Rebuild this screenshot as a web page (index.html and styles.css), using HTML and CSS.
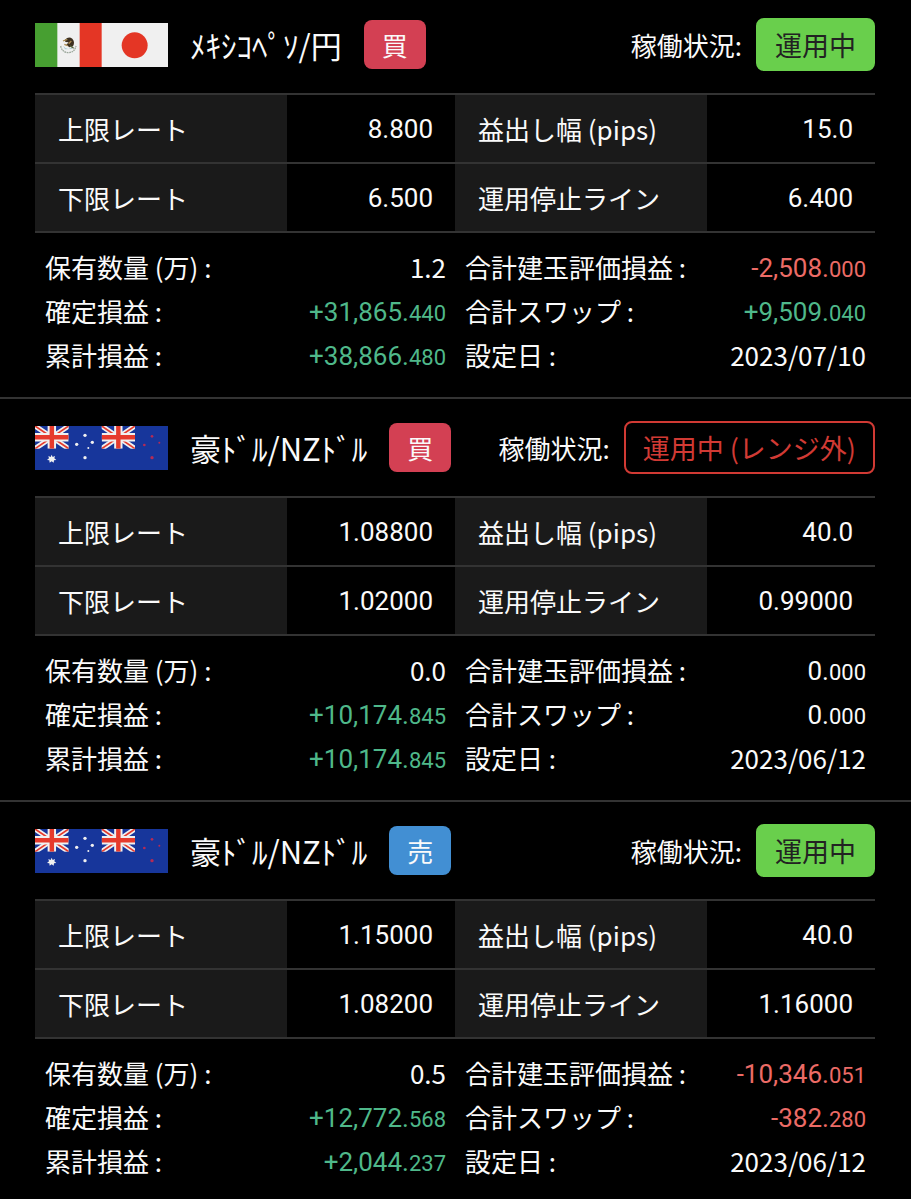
FILE: index.html
```
<!DOCTYPE html>
<html lang="ja">
<head>
  <meta charset="UTF-8">
  <meta name="viewport" content="width=device-width, initial-scale=1">
  <title>運用一覧</title>
  <link rel="stylesheet" href="styles.css">
</head>

<body>
  <!-- 国旗の共通パーツ -->
  <svg class="defs" aria-hidden="true">
    <symbol id="union" viewBox="0 0 60 40" preserveAspectRatio="none">
      <rect width="60" height="40" fill="#17369b"/>
      <path d="M0 0L60 40M60 0L0 40" stroke="#f0f0f0" stroke-width="9"/>
      <path d="M0 0L60 40M60 0L0 40" stroke="#e63a2c" stroke-width="3"/>
      <path d="M30 0V40M0 20H60" stroke="#f0f0f0" stroke-width="15"/>
      <path d="M30 0V40M0 20H60" stroke="#e63a2c" stroke-width="8"/>
    </symbol>
    <symbol id="mxn-jpy" viewBox="0 0 399 132" preserveAspectRatio="none">
      <rect width="399" height="132" fill="#f0f0f0"/>
      <rect width="67" height="132" fill="#479f31"/>
      <rect x="134" width="66" height="132" fill="#e43625"/>
      <path d="M77 69Q81 88 100 89Q119 88 123 69" fill="none" stroke="#9aa79a" stroke-width="4" stroke-dasharray="5 2"/>
      <path d="M84 68Q100 88 115 68L110 78L90 79Z" fill="#a9cdd2"/>
      <path d="M90 50Q101 38 112 47Q121 57 114 70L103 73L94 65L101 58L91 57Z" fill="#3d3020"/>
      <path d="M84 54L97 49M88 64L98 68M101 62L109 54" stroke="#a98a50" stroke-width="4"/>
      <path d="M105 68L116 76" stroke="#55643e" stroke-width="4"/>
      <circle cx="299" cy="67" r="39" fill="#e43625"/>
    </symbol>
    <symbol id="aud-nzd" viewBox="0 0 399 132" preserveAspectRatio="none">
      <rect width="399" height="132" fill="#17369b"/>
      <use href="#union" x="0" y="0" width="101" height="68"/>
      <use href="#union" x="200" y="0" width="100" height="68"/>
      <path fill="#f0f0f0" d="M50 86L53 93L60 90L58 97L64 102L57 103L56 110L50 106L44 110L43 103L36 102L42 97L40 90L47 93Z"/>
      <g fill="#f0f0f0">
        <circle cx="150" cy="28" r="5"/>
        <circle cx="125" cy="55" r="5"/>
        <circle cx="172" cy="49" r="5"/>
        <circle cx="160" cy="66" r="3"/>
        <circle cx="150" cy="95" r="5"/>
      </g>
      <g fill="#b52a55">
        <circle cx="351" cy="31" r="4"/>
        <circle cx="328" cy="57" r="4"/>
        <circle cx="373" cy="50" r="3"/>
        <circle cx="351" cy="95" r="5"/>
      </g>
    </symbol>
  </svg>

  <section class="card">
    <header class="card-header">
      <svg class="flags" role="img" aria-label="メキシコ 日本"><use href="#mxn-jpy"/></svg>
      <h2 class="pair">ﾒｷｼｺﾍﾟｿ/円</h2>
      <span class="side buy">買</span>
      <span class="status-label">稼働状況:</span>
      <span class="status running">運用中</span>
    </header>
    <table class="rates">
      <tr><th>上限レート</th><td>8.800</td><th>益出し幅 (pips)</th><td>15.0</td></tr>
      <tr><th>下限レート</th><td>6.500</td><th>運用停止ライン</th><td>6.400</td></tr>
    </table>
    <dl class="stats">
      <div><dt>保有数量 (万) :</dt><dd>1.2</dd></div>
      <div><dt>合計建玉評価損益 :</dt><dd class="num minus">-2,508.<small>000</small></dd></div>
      <div><dt>確定損益 :</dt><dd class="num plus">+31,865.<small>440</small></dd></div>
      <div><dt>合計スワップ :</dt><dd class="num plus">+9,509.<small>040</small></dd></div>
      <div><dt>累計損益 :</dt><dd class="num plus">+38,866.<small>480</small></dd></div>
      <div><dt>設定日 :</dt><dd>2023/07/10</dd></div>
    </dl>
  </section>

  <section class="card">
    <header class="card-header">
      <svg class="flags" role="img" aria-label="オーストラリア ニュージーランド"><use href="#aud-nzd"/></svg>
      <h2 class="pair">豪ﾄﾞﾙ/NZﾄﾞﾙ</h2>
      <span class="side buy">買</span>
      <span class="status-label">稼働状況:</span>
      <span class="status out">運用中 (レンジ外)</span>
    </header>
    <table class="rates">
      <tr><th>上限レート</th><td>1.08800</td><th>益出し幅 (pips)</th><td>40.0</td></tr>
      <tr><th>下限レート</th><td>1.02000</td><th>運用停止ライン</th><td>0.99000</td></tr>
    </table>
    <dl class="stats">
      <div><dt>保有数量 (万) :</dt><dd>0.0</dd></div>
      <div><dt>合計建玉評価損益 :</dt><dd class="num">0.<small>000</small></dd></div>
      <div><dt>確定損益 :</dt><dd class="num plus">+10,174.<small>845</small></dd></div>
      <div><dt>合計スワップ :</dt><dd class="num">0.<small>000</small></dd></div>
      <div><dt>累計損益 :</dt><dd class="num plus">+10,174.<small>845</small></dd></div>
      <div><dt>設定日 :</dt><dd>2023/06/12</dd></div>
    </dl>
  </section>

  <section class="card">
    <header class="card-header">
      <svg class="flags" role="img" aria-label="オーストラリア ニュージーランド"><use href="#aud-nzd"/></svg>
      <h2 class="pair">豪ﾄﾞﾙ/NZﾄﾞﾙ</h2>
      <span class="side sell">売</span>
      <span class="status-label">稼働状況:</span>
      <span class="status running">運用中</span>
    </header>
    <table class="rates">
      <tr><th>上限レート</th><td>1.15000</td><th>益出し幅 (pips)</th><td>40.0</td></tr>
      <tr><th>下限レート</th><td>1.08200</td><th>運用停止ライン</th><td>1.16000</td></tr>
    </table>
    <dl class="stats">
      <div><dt>保有数量 (万) :</dt><dd>0.5</dd></div>
      <div><dt>合計建玉評価損益 :</dt><dd class="num minus">-10,346.<small>051</small></dd></div>
      <div><dt>確定損益 :</dt><dd class="num plus">+12,772.<small>568</small></dd></div>
      <div><dt>合計スワップ :</dt><dd class="num minus">-382.<small>280</small></dd></div>
      <div><dt>累計損益 :</dt><dd class="num plus">+2,044.<small>237</small></dd></div>
      <div><dt>設定日 :</dt><dd>2023/06/12</dd></div>
    </dl>
  </section>
</body>
</html>
```

FILE: styles.css
```
* {
  box-sizing: border-box;
}
body {
  margin: 0;
  background-color: #000;
  color: #fafafa;
  font-family: "Noto Sans CJK JP", sans-serif;
  font-size: 26px;
  font-weight: 400;
}
.defs {
  display: none;
}
.card {
  padding: 22px 36px 20px 35px;
  border-bottom: 2px solid #333;
}
.card:first-of-type {
  padding-top: 18px;
}
.card:last-of-type {
  padding-bottom: 0;
  border-bottom: none;
}

/* ヘッダー */
.card-header {
  display: flex;
  align-items: center;
  height: 53px;
  margin-bottom: 22px;
}
.flags {
  width: 133px;
  height: 44px;
}
.pair {
  margin: 0 22px;
  font-size: 31px;
  font-weight: 400;
  line-height: 48px;
}
.side {
  width: 62px;
  line-height: 49px;
  border-radius: 8px;
  text-align: center;
}
.buy {
  background-color: #d34053;
}
.sell {
  background-color: #428fd3;
}
.status-label {
  margin-left: auto;
}
.status {
  margin-left: 14px;
  padding: 0 17px;
  border: 2px solid;
  border-radius: 8px;
  font-size: 27px;
  line-height: 49px;
}
.running {
  border-color: #69cf4c;
  background-color: #69cf4c;
  color: #222;
}
.out {
  border-color: #d13a34;
  color: #d13a34;
}

/* レート表 */
.rates {
  width: 100%;
  table-layout: fixed;
  border-collapse: collapse;
}
.rates tr {
  height: 69px;
  border-top: 2px solid #333;
  border-bottom: 2px solid #333;
}
.rates th {
  width: 30%;
  padding: 0 0 0 23px;
  background-color: #1a1a1a;
  font-weight: 400;
  text-align: left;
}
.rates td {
  width: 20%;
  padding: 0 22px 0 0;
  font-family: Roboto, sans-serif;
  text-align: right;
}

/* 損益 */
.stats {
  display: grid;
  grid-template-columns: 1fr 1fr;
  column-gap: 19px;
  margin: 12px 0 0;
  padding: 0 9px 0 10px;
  line-height: 44px;
}
.stats div {
  display: flex;
  justify-content: space-between;
  height: 44px;
}
.stats dd {
  margin: 0;
}
.stats .num {
  font-family: Roboto, sans-serif;
  line-height: 46px;
}
.num small {
  font-size: 22px;
}
.plus {
  color: #4fb88a;
}
.minus {
  color: #ec6b66;
}
```
